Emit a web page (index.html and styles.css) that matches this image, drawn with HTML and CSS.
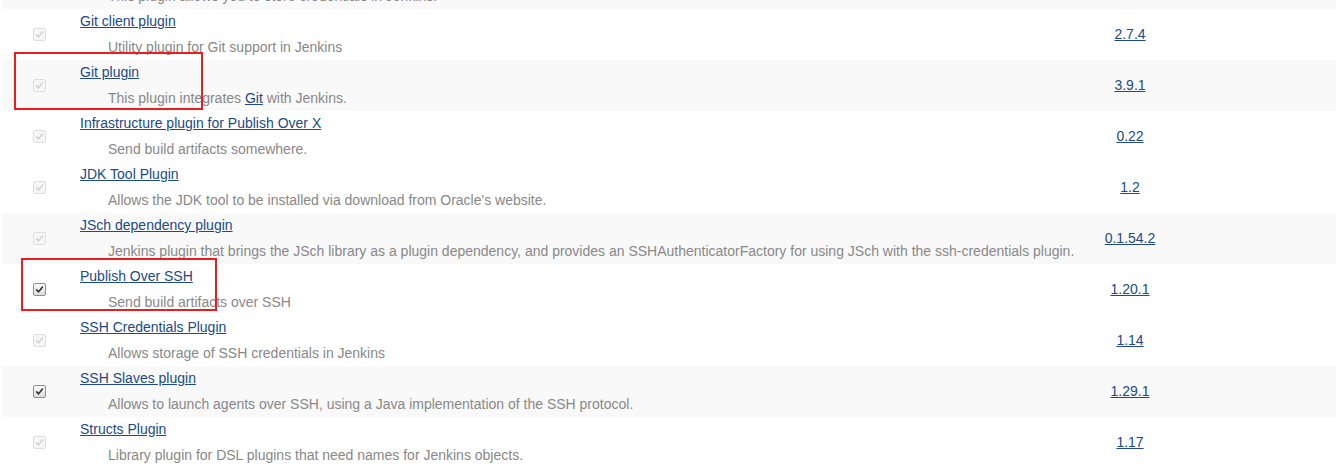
FILE: index.html
```html
<!DOCTYPE html>
<html>
<head>
<meta charset="utf-8">
<link rel="stylesheet" href="styles.css">
</head>
<body>
<div class="page">
  <div class="table">
    <div class="row alt">
      <div class="cb-cell"><span class="cb disabled"><svg viewBox="0 0 13 13"><path d="M3 6.8 L5.4 9.3 L10 3.6" /></svg></span></div>
      <div class="name-cell"><a class="title" href="#">Credentials Plugin</a><div class="desc">This plugin allows you to store credentials in Jenkins.</div></div>
      <div class="ver-cell"><a href="#">2.1.16</a></div>
      <div class="spacer"></div>
    </div>
    <div class="row">
      <div class="cb-cell"><span class="cb disabled"><svg viewBox="0 0 13 13"><path d="M3 6.8 L5.4 9.3 L10 3.6" /></svg></span></div>
      <div class="name-cell"><a class="title" href="#">Git client plugin</a><div class="desc">Utility plugin for Git support in Jenkins</div></div>
      <div class="ver-cell"><a href="#">2.7.4</a></div>
      <div class="spacer"></div>
    </div>
    <div class="row alt">
      <div class="cb-cell"><span class="cb disabled"><svg viewBox="0 0 13 13"><path d="M3 6.8 L5.4 9.3 L10 3.6" /></svg></span></div>
      <div class="name-cell"><a class="title" href="#">Git plugin</a><div class="desc">This plugin integrates <a href="#">Git</a> with Jenkins.</div></div>
      <div class="ver-cell"><a href="#">3.9.1</a></div>
      <div class="spacer"></div>
    </div>
    <div class="row">
      <div class="cb-cell"><span class="cb disabled"><svg viewBox="0 0 13 13"><path d="M3 6.8 L5.4 9.3 L10 3.6" /></svg></span></div>
      <div class="name-cell"><a class="title" href="#">Infrastructure plugin for Publish Over X</a><div class="desc">Send build artifacts somewhere.</div></div>
      <div class="ver-cell"><a href="#">0.22</a></div>
      <div class="spacer"></div>
    </div>
    <div class="row">
      <div class="cb-cell"><span class="cb disabled"><svg viewBox="0 0 13 13"><path d="M3 6.8 L5.4 9.3 L10 3.6" /></svg></span></div>
      <div class="name-cell"><a class="title" href="#">JDK Tool Plugin</a><div class="desc">Allows the JDK tool to be installed via download from Oracle's website.</div></div>
      <div class="ver-cell"><a href="#">1.2</a></div>
      <div class="spacer"></div>
    </div>
    <div class="row alt">
      <div class="cb-cell"><span class="cb disabled"><svg viewBox="0 0 13 13"><path d="M3 6.8 L5.4 9.3 L10 3.6" /></svg></span></div>
      <div class="name-cell"><a class="title" href="#">JSch dependency plugin</a><div class="desc">Jenkins plugin that brings the JSch library as a plugin dependency, and provides an SSHAuthenticatorFactory for using JSch with the ssh-credentials plugin.</div></div>
      <div class="ver-cell"><a href="#">0.1.54.2</a></div>
      <div class="spacer"></div>
    </div>
    <div class="row">
      <div class="cb-cell"><span class="cb"><svg viewBox="0 0 13 13"><path d="M3 6.8 L5.4 9.3 L10 3.6" /></svg></span></div>
      <div class="name-cell"><a class="title" href="#">Publish Over SSH</a><div class="desc">Send build artifacts over SSH</div></div>
      <div class="ver-cell"><a href="#">1.20.1</a></div>
      <div class="spacer"></div>
    </div>
    <div class="row">
      <div class="cb-cell"><span class="cb disabled"><svg viewBox="0 0 13 13"><path d="M3 6.8 L5.4 9.3 L10 3.6" /></svg></span></div>
      <div class="name-cell"><a class="title" href="#">SSH Credentials Plugin</a><div class="desc">Allows storage of SSH credentials in Jenkins</div></div>
      <div class="ver-cell"><a href="#">1.14</a></div>
      <div class="spacer"></div>
    </div>
    <div class="row alt">
      <div class="cb-cell"><span class="cb"><svg viewBox="0 0 13 13"><path d="M3 6.8 L5.4 9.3 L10 3.6" /></svg></span></div>
      <div class="name-cell"><a class="title" href="#">SSH Slaves plugin</a><div class="desc">Allows to launch agents over SSH, using a Java implementation of the SSH protocol.</div></div>
      <div class="ver-cell"><a href="#">1.29.1</a></div>
      <div class="spacer"></div>
    </div>
    <div class="row">
      <div class="cb-cell"><span class="cb disabled"><svg viewBox="0 0 13 13"><path d="M3 6.8 L5.4 9.3 L10 3.6" /></svg></span></div>
      <div class="name-cell"><a class="title" href="#">Structs Plugin</a><div class="desc">Library plugin for DSL plugins that need names for Jenkins objects.</div></div>
      <div class="ver-cell"><a href="#">1.17</a></div>
      <div class="spacer"></div>
    </div>
  </div>
  <div class="mark mark-git"></div>
  <div class="mark mark-ssh"></div>
</div>
</body>
</html>
```
FILE: styles.css
```css
html, body {
  margin: 0;
  padding: 0;
  background: #ffffff;
  overflow: hidden;
}
body {
  font-family: "Liberation Sans", Arial, sans-serif;
  font-size: 14px;
  color: #333;
}
.page {
  position: relative;
  height: 466px;
  overflow: hidden;
}
.table {
  margin-top: -42px;
  margin-left: 2px;
  display: flex;
  flex-direction: column;
}
.row {
  display: flex;
  height: 51px;
  background: #ffffff;
}
.row.alt {
  background: #f9f9f9;
}
.cb-cell {
  width: 75px;
  display: flex;
  align-items: center;
  justify-content: center;
  flex: none;
}
.cb {
  width: 11px;
  height: 11px;
  border: 1px solid #8e8e8e;
  border-radius: 2px;
  background: linear-gradient(#fbfbfb, #dcdcdc);
  display: block;
}
.cb svg {
  width: 11px;
  height: 11px;
  display: block;
}
.cb path {
  fill: none;
  stroke: #2b2b2b;
  stroke-width: 1.8;
  stroke-linecap: round;
  stroke-linejoin: round;
}
.cb.disabled {
  border-color: #dedede;
  background: #f6f6f6;
}
.cb.disabled path {
  stroke: #d2d2d2;
}
.name-cell {
  flex: 1;
  padding-left: 3px;
  padding-top: 4px;
  min-width: 0;
  white-space: nowrap;
}
a {
  color: #204a87;
  text-decoration: underline;
}
.title {
  display: block;
  line-height: 16px;
  width: max-content;
}
.desc {
  margin-top: 10px;
  padding-left: 28px;
  line-height: 16px;
  color: #888888;
}
.ver-cell {
  width: 100px;
  flex: none;
  display: flex;
  align-items: center;
  justify-content: center;
  line-height: 16px;
  padding-bottom: 2px;
  box-sizing: border-box;
}
.spacer {
  width: 156px;
  flex: none;
}
.mark {
  position: absolute;
  border: 2px solid #ee1c1c;
}
.mark-git {
  left: 14px;
  top: 52px;
  width: 185px;
  height: 54px;
}
.mark-ssh {
  left: 21px;
  top: 258px;
  width: 192px;
  height: 49px;
}
```
